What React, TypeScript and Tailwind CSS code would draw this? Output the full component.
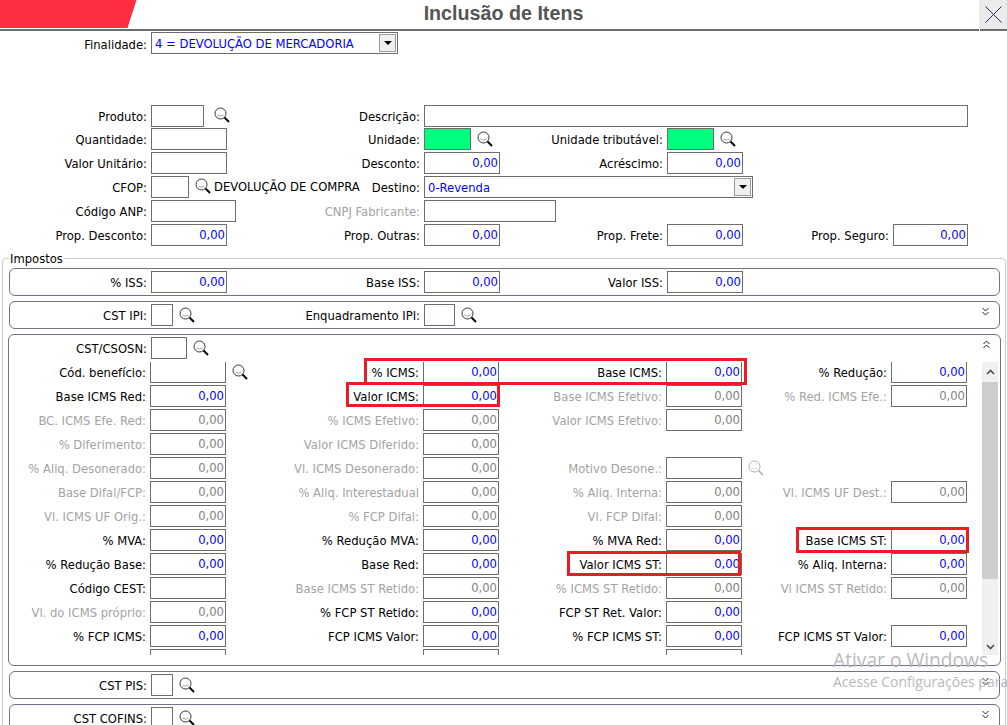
import React from 'react';

type Cell = { label: string; value?: string; off?: boolean; search?: boolean } | null;

const gridOuter = 'grid grid-cols-[137px_80px_193px_80px_163px_80px_146px_80px] h-[22px]';
const gridInner = 'grid grid-cols-[137px_80px_193px_80px_163px_80px_145px_80px] h-[22px]';

const Z = '0,00';

const icmsRows: Cell[][] = [
  [
    { label: 'Cód. benefício:', search: true },
    { label: '% ICMS:', value: Z },
    { label: 'Base ICMS:', value: Z },
    { label: '% Redução:', value: Z },
  ],
  [
    { label: 'Base ICMS Red:', value: Z },
    { label: 'Valor ICMS:', value: Z },
    { label: 'Base ICMS Efetivo:', value: Z, off: true },
    { label: '% Red. ICMS Efe.:', value: Z, off: true },
  ],
  [
    { label: 'BC. ICMS Efe. Red:', value: Z, off: true },
    { label: '% ICMS Efetivo:', value: Z, off: true },
    { label: 'Valor ICMS Efetivo:', value: Z, off: true },
    null,
  ],
  [
    { label: '% Diferimento:', value: Z, off: true },
    { label: 'Valor ICMS Diferido:', value: Z, off: true },
    null,
    null,
  ],
  [
    { label: '% Aliq. Desonerado:', value: Z, off: true },
    { label: 'Vl. ICMS Desonerado:', value: Z, off: true },
    { label: 'Motivo Desone.:', off: true, search: true },
    null,
  ],
  [
    { label: 'Base Difal/FCP:', value: Z, off: true },
    { label: '% Aliq. Interestadual', value: Z, off: true },
    { label: '% Aliq. Interna:', value: Z, off: true },
    { label: 'Vl. ICMS UF Dest.:', value: Z, off: true },
  ],
  [
    { label: 'Vl. ICMS UF Orig.:', value: Z, off: true },
    { label: '% FCP Difal:', value: Z, off: true },
    { label: 'Vl. FCP Difal:', value: Z, off: true },
    null,
  ],
  [
    { label: '% MVA:', value: Z },
    { label: '% Redução MVA:', value: Z },
    { label: '% MVA Red:', value: Z },
    { label: 'Base ICMS ST:', value: Z },
  ],
  [
    { label: '% Redução Base:', value: Z },
    { label: 'Base Red:', value: Z },
    { label: 'Valor ICMS ST:', value: Z },
    { label: '% Aliq. Interna:', value: Z },
  ],
  [
    { label: 'Código CEST:' },
    { label: 'Base ICMS ST Retido:', value: Z, off: true },
    { label: '% ICMS ST Retido:', value: Z, off: true },
    { label: 'Vl ICMS ST Retido:', value: Z, off: true },
  ],
  [
    { label: 'Vl. do ICMS próprio:', value: Z, off: true },
    { label: '% FCP ST Retido:', value: Z },
    { label: 'FCP ST Ret. Valor:', value: Z },
    null,
  ],
  [
    { label: '% FCP ICMS:', value: Z },
    { label: 'FCP ICMS Valor:', value: Z },
    { label: '% FCP ICMS ST:', value: Z },
    { label: 'FCP ICMS ST Valor:', value: Z },
  ],
  [{ label: '' }, { label: '' }, { label: '' }, null],
];

const Search = ({ off, className = '' }: { off?: boolean; className?: string }) => (
  <svg width="16" height="16" viewBox="0 0 16 16" className={`shrink-0 ${className}`} fill="none">
    <circle cx="6.5" cy="6.5" r="5.5" stroke={off ? '#b0b0b0' : '#333'} strokeWidth="1" />
    <path d="M3.5 8 Q6.5 10.5 9.5 8" stroke={off ? '#d8d8d8' : '#a0a0a0'} strokeWidth="1" />
    <path d="M10.5 10.5 L15 15" stroke={off ? '#aaa' : '#000'} strokeWidth={off ? 1.5 : 2} />
  </svg>
);

const Chevrons = ({ up }: { up?: boolean }) => (
  <svg width="7" height="9" viewBox="0 0 7 9" fill="none" stroke="#222" strokeWidth="1">
    {up ? (
      <path d="M0.5 4 L3.5 1 L6.5 4 M0.5 8 L3.5 5 L6.5 8" />
    ) : (
      <path d="M0.5 1 L3.5 4 L6.5 1 M0.5 5 L3.5 8 L6.5 5" />
    )}
  </svg>
);

const Label = ({ children, off }: { children?: React.ReactNode; off?: boolean }) => (
  <div className={`text-right whitespace-nowrap pt-px leading-[22px] ${off ? 'text-[#a3a3a3]' : 'text-black'}`}>
    {children}
  </div>
);

const Box = ({ value, off, className = 'w-[76px]' }: { value?: string; off?: boolean; className?: string }) => (
  <div
    className={`h-[22px] shrink-0 border border-[#6d6d6d] text-right pr-px leading-[20px] ${
      off ? 'text-[#808080]' : 'text-[#0000ff]'
    } ${className}`}
  >
    {value}
  </div>
);

const Select = ({ text, className }: { text: string; className: string }) => (
  <div className={`h-[22px] shrink-0 border border-[#6d6d6d] pl-[3px] pr-px flex items-center justify-between ${className}`}>
    <span className="text-[#0000ff] pt-[4px]">{text}</span>
    <div className="w-[17px] h-[18px] bg-[#f0f0f0] border border-[#999] flex items-center justify-center">
      <div className="w-0 h-0 border-x-[4px] border-x-transparent border-t-[4px] border-t-black" />
    </div>
  </div>
);

const Pair = ({ children }: { children: React.ReactNode }) => (
  <div className="flex items-center gap-[6px] pl-1 h-[22px]">{children}</div>
);

const Panel = ({ children, className = '' }: { children: React.ReactNode; className?: string }) => (
  <div className={`relative border border-[#74708c] rounded-[6px] ${className}`}>{children}</div>
);

const Toggle = ({ up, top }: { up?: boolean; top: string }) => (
  <div className={`absolute right-[10px] leading-none ${top}`}>
    <Chevrons up={up} />
  </div>
);

const Scrollbar = () => (
  <div className="w-[16px] h-[293px] bg-[#f0f0f0] flex flex-col items-center shrink-0">
    <div className="h-[20px] flex items-center justify-center">
      <svg width="9" height="6" viewBox="0 0 9 6" fill="none" stroke="#505050" strokeWidth="1.6">
        <path d="M1 5 L4.5 1.5 L8 5" />
      </svg>
    </div>
    <div className="w-full h-[197px] bg-[#cdcdcd]" />
    <div className="mt-auto h-[16px] flex items-center justify-center">
      <svg width="9" height="6" viewBox="0 0 9 6" fill="none" stroke="#505050" strokeWidth="1.6">
        <path d="M1 1 L4.5 4.5 L8 1" />
      </svg>
    </div>
  </div>
);

const Highlight = ({ className }: { className: string }) => (
  <div className={`absolute border-[3px] border-[#ed1c24] pointer-events-none ${className}`} />
);

export default function App() {
  return (
    <div className="relative w-[1007px] h-[725px] overflow-hidden bg-white text-[11.6px] font-['DejaVu_Sans',sans-serif]">
      {/* Title bar */}
      <header className="relative h-[31px] flex items-start justify-between border-b-2 border-[#6d6d6d]">
        <svg width="137" height="28" viewBox="0 0 137 28" className="block">
          <polygon points="0,0 136.5,0 127.5,28 0,28" fill="#ff2d42" />
        </svg>
        <h1 className="absolute left-[303px] w-[401px] top-0 text-center text-[19.7px] leading-[27px] font-bold text-[#555] font-['Liberation_Sans',sans-serif]">
          Inclusão de Itens
        </h1>
        <div className="w-[28px] h-[29px] bg-[#ebebeb] flex items-center justify-center">
          <svg width="17" height="17" viewBox="0 0 17 17" stroke="#1b2f5c" strokeWidth="1">
            <path d="M0.5 0.5 L16.5 16.5 M16.5 0.5 L0.5 16.5" />
          </svg>
        </div>
        <div className="absolute right-[27px] -bottom-[2px] w-px h-[2px] bg-white" />
      </header>

      {/* Finalidade */}
      <div className={`${gridOuter} mt-px pl-[10px]`}>
        <div className="pt-px"><Label>Finalidade:</Label></div>
        <div className="pl-1">
          <Select text="4 = DEVOLUÇÃO DE MERCADORIA" className="w-[247px]" />
        </div>
      </div>

      {/* Produto */}
      <div className="mt-[51px] pl-[10px] flex flex-col">
        <div className={gridOuter}>
          <Label>Produto:</Label>
          <Pair><Box className="w-[53px]" /><Search className="ml-1 -mt-[2px]" /></Pair>
          <Label>Descrição:</Label>
          <div className="pl-1"><Box className="w-[544px]" /></div>
        </div>
        <div className={`${gridOuter} mt-px`}>
          <Label>Quantidade:</Label>
          <div className="pl-1"><Box /></div>
          <Label>Unidade:</Label>
          <Pair><Box className="w-[47px] bg-[#00ff7f]" /><Search /></Pair>
          <Label>Unidade tributável:</Label>
          <Pair><Box className="w-[47px] bg-[#00ff7f]" /><Search /></Pair>
        </div>
        <div className={`${gridOuter} mt-[2px]`}>
          <Label>Valor Unitário:</Label>
          <div className="pl-1"><Box /></div>
          <Label>Desconto:</Label>
          <div className="pl-1"><Box value={Z} /></div>
          <Label>Acréscimo:</Label>
          <div className="pl-1"><Box value={Z} /></div>
        </div>
        <div className={`${gridOuter} mt-[2px]`}>
          <Label>CFOP:</Label>
          <Pair>
            <Box className="w-[38px]" />
            <Search className="-mt-[2px]" />
            <span className="whitespace-nowrap -ml-[3px] pt-[2px]">DEVOLUÇÃO DE COMPRA</span>
          </Pair>
          <Label>Destino:</Label>
          <div className="pl-1 col-span-3">
            <Select text="0-Revenda" className="w-[329px]" />
          </div>
        </div>
        <div className={`${gridOuter} mt-[2px]`}>
          <Label>Código ANP:</Label>
          <div className="pl-1"><Box className="w-[85px]" /></div>
          <Label off>CNPJ Fabricante:</Label>
          <div className="pl-1"><Box className="w-[132px]" /></div>
        </div>
        <div className={`${gridOuter} mt-[2px]`}>
          <Label>Prop. Desconto:</Label>
          <div className="pl-1"><Box value={Z} /></div>
          <Label>Prop. Outras:</Label>
          <div className="pl-1"><Box value={Z} /></div>
          <Label>Prop. Frete:</Label>
          <div className="pl-1"><Box value={Z} /></div>
          <Label>Prop. Seguro:</Label>
          <div className="pl-1"><Box value={Z} className="w-[75px]" /></div>
        </div>
      </div>

      {/* Impostos */}
      <fieldset className="mt-[5px] ml-[2px] mr-px h-[600px] border border-[#c8c8c8] rounded-[4px] pl-[6px] pr-[5px]">
        <legend className="px-px leading-[14px] text-black">
          <span className="relative top-px">Impostos</span>
        </legend>

        <div className="flex flex-col mt-[3px]">
          <Panel className="h-[28px] pt-[2px]">
            <div className={gridOuter}>
              <Label>% ISS:</Label>
              <div className="pl-1"><Box value={Z} /></div>
              <Label>Base ISS:</Label>
              <div className="pl-1"><Box value={Z} /></div>
              <Label>Valor ISS:</Label>
              <div className="pl-1"><Box value={Z} /></div>
            </div>
          </Panel>

          <Panel className="h-[28px] pt-[2px] mt-[5px]">
            <div className={gridOuter}>
              <Label>CST IPI:</Label>
              <Pair><Box className="w-[22px]" /><Search /></Pair>
              <Label>Enquadramento IPI:</Label>
              <Pair><Box className="w-[31px]" /><Search /></Pair>
            </div>
            <Toggle top="top-[5px]" />
          </Panel>

          {/* ICMS */}
          <Panel className="h-[332px] pt-[2px] mt-[5px] -mx-px">
            <div className="pl-px">
              <div className={gridOuter}>
                <Label>CST/CSOSN:</Label>
                <Pair><Box className="w-[36px]" /><Search /></Pair>
              </div>
            </div>
            <Toggle up top="top-[5px]" />

            <div className="flex mt-[3px]">
              <div className="w-[973px] h-[293px] overflow-hidden">
                <div className="-mt-px flex flex-col gap-[2px]">
                  {icmsRows.map((row, i) => (
                    <div key={i} className={gridInner}>
                      {row.map((cell, j) =>
                        cell ? (
                          <React.Fragment key={j}>
                            <Label off={cell.off}>{cell.label}</Label>
                            <Pair>
                              <Box value={cell.value} off={cell.off} />
                              {cell.search && <Search off={cell.off} />}
                            </Pair>
                          </React.Fragment>
                        ) : (
                          <React.Fragment key={j}>
                            <div />
                            <div />
                          </React.Fragment>
                        )
                      )}
                    </div>
                  ))}
                </div>
              </div>
              <Scrollbar />
            </div>

            <Highlight className="left-[355px] top-[23px] w-[383px] h-[27px]" />
            <Highlight className="left-[337px] top-[47px] w-[154px] h-[25px]" />
            <Highlight className="left-[787px] top-[192px] w-[173px] h-[26px]" />
            <Highlight className="left-[558px] top-[216px] w-[174px] h-[25px]" />
          </Panel>

          <Panel className="h-[28px] pt-[2px] mt-[5px]">
            <div className={gridOuter}>
              <Label>CST PIS:</Label>
              <Pair><Box className="w-[22px]" /><Search /></Pair>
            </div>
            <Toggle top="top-[5px]" />
          </Panel>

          <Panel className="h-[28px] pt-[2px] mt-[5px]">
            <div className={gridOuter}>
              <Label>CST COFINS:</Label>
              <Pair><Box className="w-[22px]" /><Search /></Pair>
            </div>
            <Toggle top="top-[5px]" />
          </Panel>
        </div>
      </fieldset>

      {/* Windows activation watermark */}
      <div className="absolute left-[833px] top-[647px] whitespace-nowrap text-[#b9b9b9] font-['Open_Sans',sans-serif] pointer-events-none">
        <div className="text-[19.2px] leading-[26px]">Ativar o Windows</div>
        <div className="text-[14px] leading-[20px] -mt-px">Acesse Configurações para</div>
      </div>
    </div>
  );
}
